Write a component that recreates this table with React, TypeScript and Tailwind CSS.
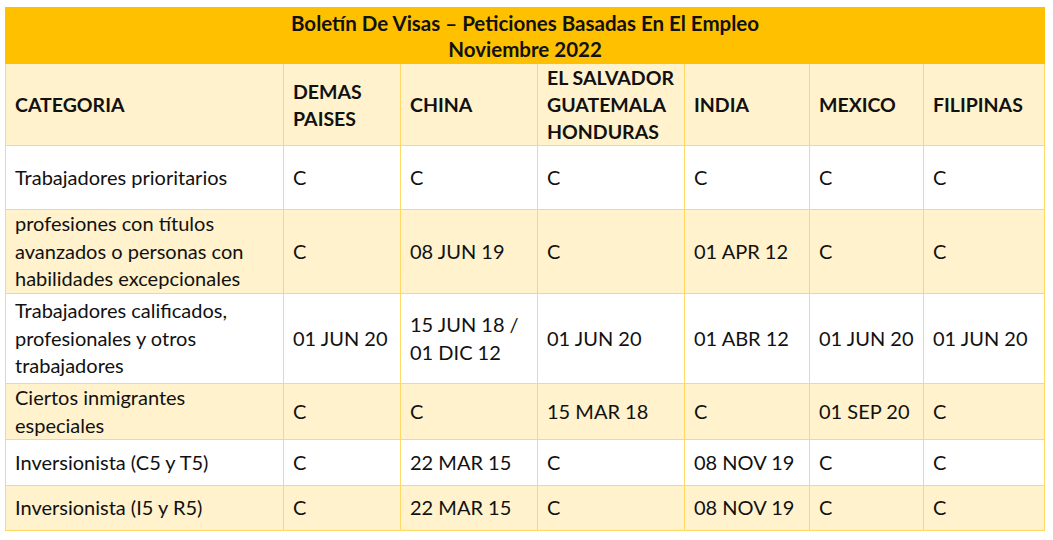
const headers = ["CATEGORIA", "DEMAS PAISES", "CHINA", "EL SALVADOR GUATEMALA HONDURAS", "INDIA", "MEXICO", "FILIPINAS"];

const headerCells = [
  ["CATEGORIA"],
  ["DEMAS", "PAISES"],
  ["CHINA"],
  ["EL SALVADOR", "GUATEMALA", "HONDURAS"],
  ["INDIA"],
  ["MEXICO"],
  ["FILIPINAS"],
];

type Row = { h: string; band: boolean; cells: string[][] };

const rows: Row[] = [
  { h: "h-[64px]", band: false, cells: [["Trabajadores prioritarios"], ["C"], ["C"], ["C"], ["C"], ["C"], ["C"]] },
  {
    h: "h-[84px]",
    band: true,
    cells: [["profesiones con títulos", "avanzados o personas con", "habilidades excepcionales"], ["C"], ["08 JUN 19"], ["C"], ["01 APR 12"], ["C"], ["C"]],
  },
  {
    h: "h-[90px]",
    band: false,
    cells: [
      ["Trabajadores calificados,", "profesionales y otros", "trabajadores"],
      ["01 JUN 20"],
      ["15 JUN 18 /", "01 DIC 12"],
      ["01 JUN 20"],
      ["01 ABR 12"],
      ["01 JUN 20"],
      ["01 JUN 20"],
    ],
  },
  { h: "h-[56px]", band: true, cells: [["Ciertos inmigrantes", "especiales"], ["C"], ["C"], ["15 MAR 18"], ["C"], ["01 SEP 20"], ["C"]] },
  { h: "h-[46px]", band: false, cells: [["Inversionista (C5 y T5)"], ["C"], ["22 MAR 15"], ["C"], ["08 NOV 19"], ["C"], ["C"]] },
  { h: "h-[45px]", band: true, cells: [["Inversionista (I5 y R5)"], ["C"], ["22 MAR 15"], ["C"], ["08 NOV 19"], ["C"], ["C"]] },
];

function Lines({ lines }: { lines: string[] }) {
  return (
    <>
      {lines.map((l, i) => (
        <div key={i} className="whitespace-nowrap">
          {l}
        </div>
      ))}
    </>
  );
}

export default function App() {
  return (
    <div className="min-h-[540px] w-[1053px] bg-white pl-[5px] pt-[7px] font-['Lato',sans-serif] text-[20px] leading-[27.5px] text-[#111]">
      <table className="w-[1039px] table-fixed border-collapse" aria-label={headers.join(" ")}>
        <colgroup>
          <col className="w-[278px]" />
          <col className="w-[117px]" />
          <col className="w-[137px]" />
          <col className="w-[147px]" />
          <col className="w-[125px]" />
          <col className="w-[114px]" />
          <col className="w-[121px]" />
        </colgroup>
        <thead>
          <tr className="h-[56px]">
            <th colSpan={7} className="border border-[#FFC000] bg-[#FFC000] text-center align-middle text-[20.5px] font-bold leading-[26px]">
              <div>Boletín De Visas – Peticiones Basadas En El Empleo</div>
              <div>Noviembre 2022</div>
            </th>
          </tr>
          <tr className="h-[82px] bg-[#FFF2CC]">
            {headerCells.map((c, i) => (
              <th key={i} className="border border-[#FFD966] pl-[9px] pr-[4px] text-left align-middle text-[19.5px] font-bold leading-[27px]">
                <Lines lines={c} />
              </th>
            ))}
          </tr>
        </thead>
        <tbody>
          {rows.map((r, ri) => (
            <tr key={ri} className={`${r.h} ${r.band ? "bg-[#FFF2CC]" : "bg-white"}`}>
              {r.cells.map((c, ci) => (
                <td key={ci} className="border border-[#FFD966] pl-[9px] pr-[4px] text-left align-middle">
                  <Lines lines={c} />
                </td>
              ))}
            </tr>
          ))}
        </tbody>
      </table>
    </div>
  );
}
